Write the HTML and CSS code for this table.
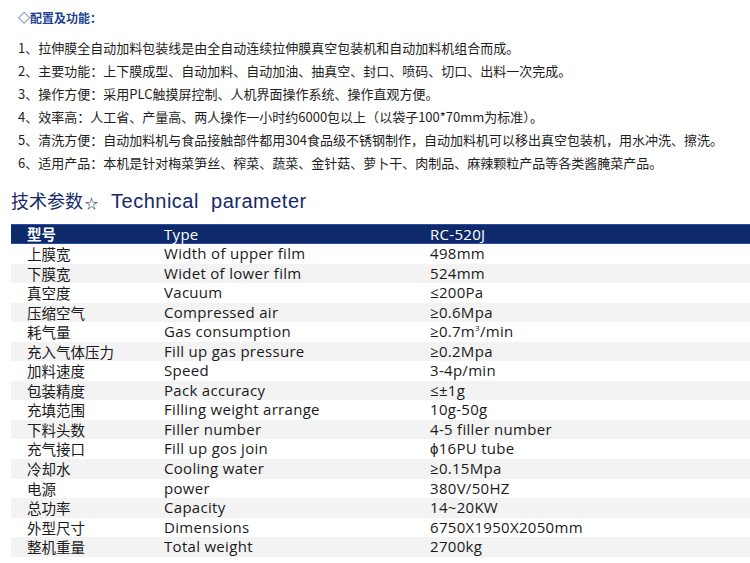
FILE: index.html
```html
<!DOCTYPE html>
<html lang="zh">
<head>
<meta charset="utf-8">
<link rel="stylesheet" href="styles.css">
</head>
<body>
<div class="page">
  <section class="intro">
    <h2 class="intro-title">◇配置及功能：</h2>
    <ol class="features">
      <li>1、拉伸膜全自动加料包装线是由全自动连续拉伸膜真空包装机和自动加料机组合而成。</li>
      <li>2、主要功能<span class="pc">：</span>上下膜成型、自动加料、自动加油、抽真空、封口、喷码、切口、出料一次完成。</li>
      <li>3、操作方便<span class="pc">：</span>采用PLC触摸屏控制、人机界面操作系统、操作直观方便。</li>
      <li>4、效率高<span class="pc">：</span>人工省、产量高、两人操作一小时约6000包以上<span class="pc">（</span>以袋子100*70mm为标准<span class="pc">）</span>。</li>
      <li>5、清洗方便<span class="pc">：</span>自动加料机与食品接触部件都用304食品级不锈钢制作<span class="pc">，</span>自动加料机可以移出真空包装机<span class="pc">，</span>用水冲洗、擦洗。</li>
      <li>6、适用产品<span class="pc">：</span>本机是针对梅菜笋丝、榨菜、蔬菜、金针菇、萝卜干、肉制品、麻辣颗粒产品等各类酱腌菜产品。</li>
    </ol>
  </section>
  <h1 class="tech-title"><span class="cn">技术参数<span class="star">☆</span></span><span class="en">Technical&nbsp; parameter</span></h1>
  <div class="spec">
    <div class="row head"><span>型号</span><span>Type</span><span>RC-520J</span></div>
    <div class="row"><span>上膜宽</span><span>Width of upper film</span><span>498mm</span></div>
    <div class="row alt"><span>下膜宽</span><span>Widet of lower film</span><span>524mm</span></div>
    <div class="row"><span>真空度</span><span>Vacuum</span><span>≤200Pa</span></div>
    <div class="row alt"><span>压缩空气</span><span>Compressed air</span><span>≥0.6Mpa</span></div>
    <div class="row"><span>耗气量</span><span>Gas consumption</span><span>≥0.7m<sup>3</sup>/min</span></div>
    <div class="row alt"><span>充入气体压力</span><span>Fill up gas pressure</span><span>≥0.2Mpa</span></div>
    <div class="row"><span>加料速度</span><span>Speed</span><span>3-4p/min</span></div>
    <div class="row alt"><span>包装精度</span><span>Pack accuracy</span><span>≤±1g</span></div>
    <div class="row"><span>充填范围</span><span>Filling weight arrange</span><span>10g-50g</span></div>
    <div class="row alt"><span>下料头数</span><span>Filler number</span><span>4-5 filler number</span></div>
    <div class="row"><span>充气接口</span><span>Fill up gos join</span><span>ϕ16PU tube</span></div>
    <div class="row alt"><span>冷却水</span><span>Cooling water</span><span>≥0.15Mpa</span></div>
    <div class="row"><span>电源</span><span>power</span><span>380V/50HZ</span></div>
    <div class="row alt"><span>总功率</span><span>Capacity</span><span>14~20KW</span></div>
    <div class="row"><span>外型尺寸</span><span>Dimensions</span><span>6750X1950X2050mm</span></div>
    <div class="row alt"><span>整机重量</span><span>Total weight</span><span>2700kg</span></div>
  </div>
</div>
</body>
</html>
```
FILE: styles.css
```css
html, body {
  margin: 0;
  padding: 0;
  background: #fff;
}
.page {
  width: 750px;
  height: 563px;
  overflow: hidden;
  display: flex;
  flex-direction: column;
  font-family: "Noto Sans CJK SC", sans-serif;
}
.intro {
  padding: 10px 0 0 18px;
}
.intro-title {
  margin: 0;
  font-size: 12px;
  line-height: 16px;
  font-weight: bold;
  color: #1c3f8e;
}
.features {
  list-style: none;
  margin: 10px 0 0 0;
  padding: 0;
  font-size: 13px;
  line-height: 23px;
  color: #1e1e1e;
}
.features .pc {
  font-family: "Noto Sans CJK TC", sans-serif;
}
.tech-title {
  margin: 12px 0 0 11px;
  font-weight: normal;
  color: #15296b;
  font-size: 18px;
  line-height: 28px;
  display: flex;
  align-items: baseline;
}
.tech-title .star {
  font-size: 13px;
  margin: 0 13px 0 2px;
}
.tech-title .en {
  font-family: "Liberation Sans", sans-serif;
  font-size: 20px;
  letter-spacing: 0.5px;
}
.spec {
  margin: 7px 0 0 11px;
  font-family: "Open Sans", "Noto Sans CJK SC", sans-serif;
  font-size: 15px;
  color: #1a1a1a;
}
.row {
  display: grid;
  grid-template-columns: 153px 266px 1fr;
  height: 19.56px;
  line-height: 19.56px;
  align-items: center;
  letter-spacing: 0.3px;
}
.row span:first-child {
  padding-left: 16px;
  font-family: "Noto Sans CJK SC", sans-serif;
  font-size: 14.5px;
  letter-spacing: 0;
}
.row.alt {
  background: #f3f3f3;
}
.row.head {
  background: #0f2a6b;
  color: #fff;
  border-top: 1px solid #2a4ba6;
  border-bottom: 1px solid #2a4ba6;
  height: 18px;
  line-height: 18px;
}
.row.head span:first-child {
  font-weight: bold;
}
sup {
  font-size: 8px;
  line-height: 0;
  vertical-align: 6px;
}
```
